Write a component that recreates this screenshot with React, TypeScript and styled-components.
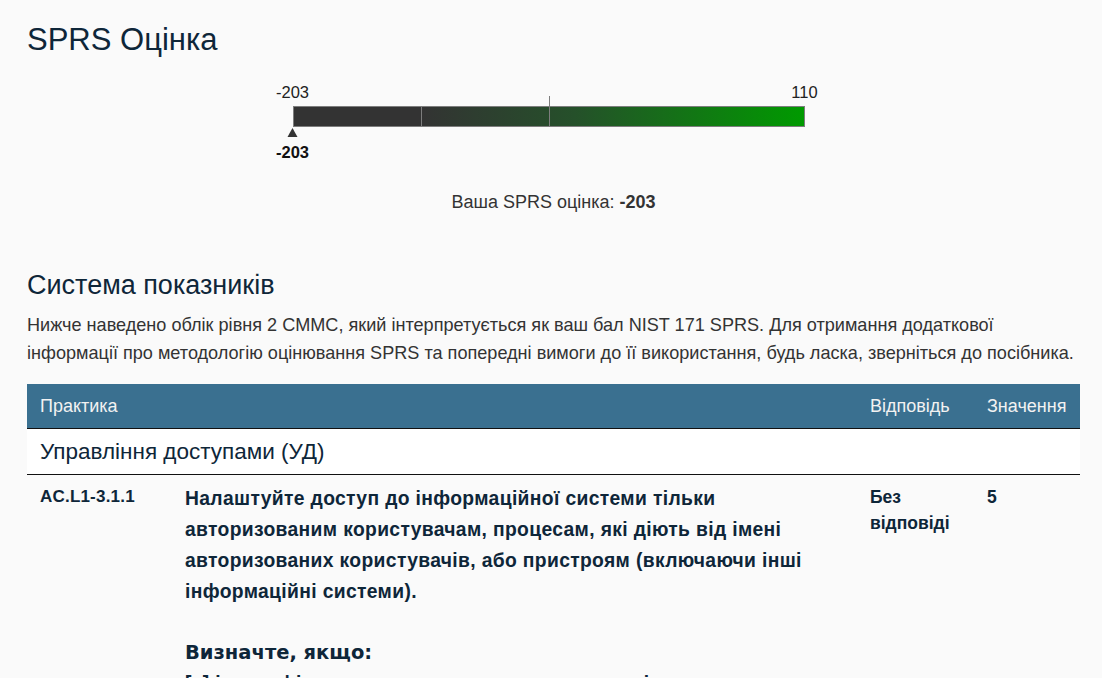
import React from "react"
import styled, { createGlobalStyle } from "styled-components"

const GlobalStyle = createGlobalStyle`
  html, body {
    margin: 0;
    padding: 0;
    background: #fafafa;
  }
  body {
    font-family: "Liberation Sans", Arial, sans-serif;
    color: #333;
  }
`

const ink = "#0e2639"

const Page = styled.main`
  padding: 22px 22px 0 27px;
`

const Title = styled.h1`
  margin: 0;
  font-size: 31px;
  line-height: 36px;
  font-weight: 400;
  color: ${ink};
`

const GaugeSection = styled.section`
  display: flex;
  flex-direction: column;
  align-items: center;
  margin-top: 26px;
`

const Gauge = styled.div`
  position: relative;
  width: 512px;
  padding-right: 10px;
  padding-top: 22px;
`

const EndLabel = styled.span<{ $side: "left" | "right" }>`
  position: absolute;
  top: 0;
  ${p => (p.$side === "left" ? "left: 0;" : "left: 512px;")}
  transform: translateX(-50%);
  font-size: 16.5px;
  line-height: 16px;
  color: #222;
`

const Bar = styled.div`
  position: relative;
  height: 19px;
  border: 1px solid #7d7d7d;
  background: linear-gradient(
    to right,
    #333 0%,
    #333 25%,
    #25502a 55%,
    #009a00 100%
  );
`

const Tick = styled.span<{ $tall?: boolean }>`
  position: absolute;
  bottom: 0;
  width: 1px;
  background: #7d7d7d;
  top: ${p => (p.$tall ? "-11px" : "0")};
`

const MarkerTrack = styled.div`
  position: relative;
  height: 38px;
`

const Marker = styled.div`
  position: absolute;
  top: 1px;
  transform: translateX(-50%);
  display: flex;
  flex-direction: column;
  align-items: center;
`

const Triangle = styled.span`
  width: 0;
  height: 0;
  border-left: 5px solid transparent;
  border-right: 5px solid transparent;
  border-bottom: 9px solid #333;
`

const MarkerValue = styled.span`
  margin-top: 7px;
  font-size: 16.5px;
  line-height: 16px;
  font-weight: 700;
  color: #111;
`

const Score = styled.p`
  margin: 27px 0 0;
  text-align: center;
  font-size: 18px;
  line-height: 20px;
  color: #333;

  b {
    font-weight: 700;
  }
`

const SectionTitle = styled.h2`
  margin: 57px 0 0;
  font-size: 27px;
  line-height: 32px;
  font-weight: 400;
  color: ${ink};
`

const Intro = styled.p`
  margin: 10px -6px 0 0;
  font-size: 18.1px;
  line-height: 28px;
  color: #333;
`

const Table = styled.div`
  margin-top: 17px;
`

const columns = "145px 1fr 117px 106px"

const HeadRow = styled.div`
  display: grid;
  grid-template-columns: ${columns};
  align-items: center;
  height: 44px;
  background: #3a7090;
  color: #f2f2f2;
  font-size: 18px;
`

const HeadCell = styled.div<{ $span?: number }>`
  padding: 0 13px;
  grid-column: span ${p => p.$span ?? 1};
`

const GroupRow = styled.div`
  height: 45px;
  display: flex;
  align-items: center;
  padding: 0 13px;
  background: #fff;
  border-top: 1px solid #111;
  border-bottom: 1px solid #111;
  font-size: 22.5px;
  color: ${ink};
`

const PracticeRow = styled.div`
  display: grid;
  grid-template-columns: ${columns};
  align-items: start;
  padding-top: 8px;
  color: ${ink};
`

const Cell = styled.div<{ $offset?: number }>`
  padding: ${p => p.$offset ?? 0}px 13px 0;
`

const Code = styled(Cell)`
  font-size: 17px;
  line-height: 20px;
  font-weight: 700;
  letter-spacing: 0.2px;
`

const Statement = styled.p`
  margin: 0;
  font-size: 19.3px;
  line-height: 31px;
  font-weight: 700;
  letter-spacing: 0.35px;
`

const Determine = styled.h4`
  margin: 31px 0 0;
  font-family: "DejaVu Sans", Verdana, sans-serif;
  font-size: 19.5px;
  line-height: 30px;
  font-weight: 700;
`

const Answer = styled(Cell)`
  font-size: 17.5px;
  line-height: 26px;
  font-weight: 700;
`

const gauge = { min: -203, max: 110, score: -203 }

export default function App() {
  const pos = ((gauge.score - gauge.min) / (gauge.max - gauge.min)) * 100

  return (
    <>
      <GlobalStyle />
      <Page>
        <Title>SPRS Оцінка</Title>

        <GaugeSection>
          <Gauge>
            <EndLabel $side="left">{gauge.min}</EndLabel>
            <EndLabel $side="right">{gauge.max}</EndLabel>
            <Bar>
              <Tick style={{ left: "25%" }} />
              <Tick $tall style={{ left: "50%" }} />
            </Bar>
            <MarkerTrack>
              <Marker style={{ left: `${pos}%` }}>
                <Triangle />
                <MarkerValue>{gauge.score}</MarkerValue>
              </Marker>
            </MarkerTrack>
          </Gauge>
        </GaugeSection>

        <Score>
          Ваша SPRS оцінка: <b>{gauge.score}</b>
        </Score>

        <SectionTitle>Система показників</SectionTitle>
        <Intro>
          Нижче наведено облік рівня 2 CMMC, який інтерпретується як ваш бал
          NIST 171 SPRS. Для отримання додаткової
          <br />
          інформації про методологію оцінювання SPRS та попередні вимоги до її
          використання, будь ласка, зверніться до посібника.
        </Intro>

        <Table>
          <HeadRow>
            <HeadCell $span={2}>Практика</HeadCell>
            <HeadCell>Відповідь</HeadCell>
            <HeadCell>Значення</HeadCell>
          </HeadRow>
          <GroupRow>Управління доступами (УД)</GroupRow>
          <PracticeRow>
            <Code $offset={4}>AC.L1-3.1.1</Code>
            <Cell>
              <Statement>
                Налаштуйте доступ до інформаційної системи тільки авторизованим
                користувачам, процесам, які діють від імені авторизованих
                користувачів, або пристроям (включаючи інші інформаційні
                системи).
              </Statement>
              <Determine>Визначте, якщо:</Determine>
              <Statement>[a] ідентифіковано авторизованих користувачів;</Statement>
            </Cell>
            <Answer $offset={1}>Без відповіді</Answer>
            <Answer $offset={1}>5</Answer>
          </PracticeRow>
        </Table>
      </Page>
    </>
  )
}
